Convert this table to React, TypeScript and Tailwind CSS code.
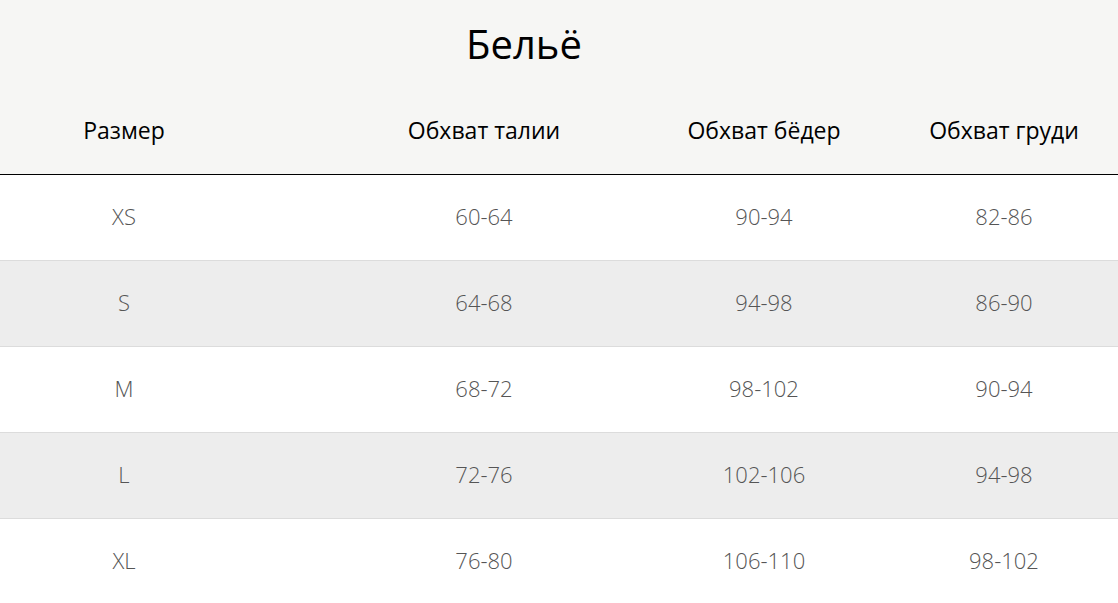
const rows = [
  ["XS", "60-64", "90-94", "82-86"],
  ["S", "64-68", "94-98", "86-90"],
  ["M", "68-72", "98-102", "90-94"],
  ["L", "72-76", "102-106", "94-98"],
  ["XL", "76-80", "106-110", "98-102"],
];

const headers = ["Размер", "Обхват талии", "Обхват бёдер", "Обхват груди"];

const cols = "grid grid-cols-[248px_472px_88px_392px] w-[1200px]";

export default function App() {
  return (
    <div className="w-[1118px] h-[603px] overflow-hidden bg-white font-['Open_Sans',sans-serif]">
      <div className="bg-[#f6f6f4] border-b border-black">
        <div className="w-[1048px] h-[88px] flex items-center justify-center text-[40px] text-black">
          Бельё
        </div>
        <div className={`${cols} h-[86px] pb-[1px]`}>
          {headers.map((h) => (
            <div key={h} className="flex items-center justify-center whitespace-nowrap text-[23px] text-black">
              {h}
            </div>
          ))}
        </div>
      </div>
      {rows.map((r, i) => (
        <div
          key={r[0]}
          className={`${cols} h-[86px] pb-[3px] border-b border-[#dcdcdc] ${i % 2 ? "bg-[#ededed]" : "bg-white"}`}
        >
          {r.map((v, j) => (
            <div key={j} className="flex items-center justify-center whitespace-nowrap text-[22px] font-light text-[#555]">
              {v}
            </div>
          ))}
        </div>
      ))}
    </div>
  );
}
